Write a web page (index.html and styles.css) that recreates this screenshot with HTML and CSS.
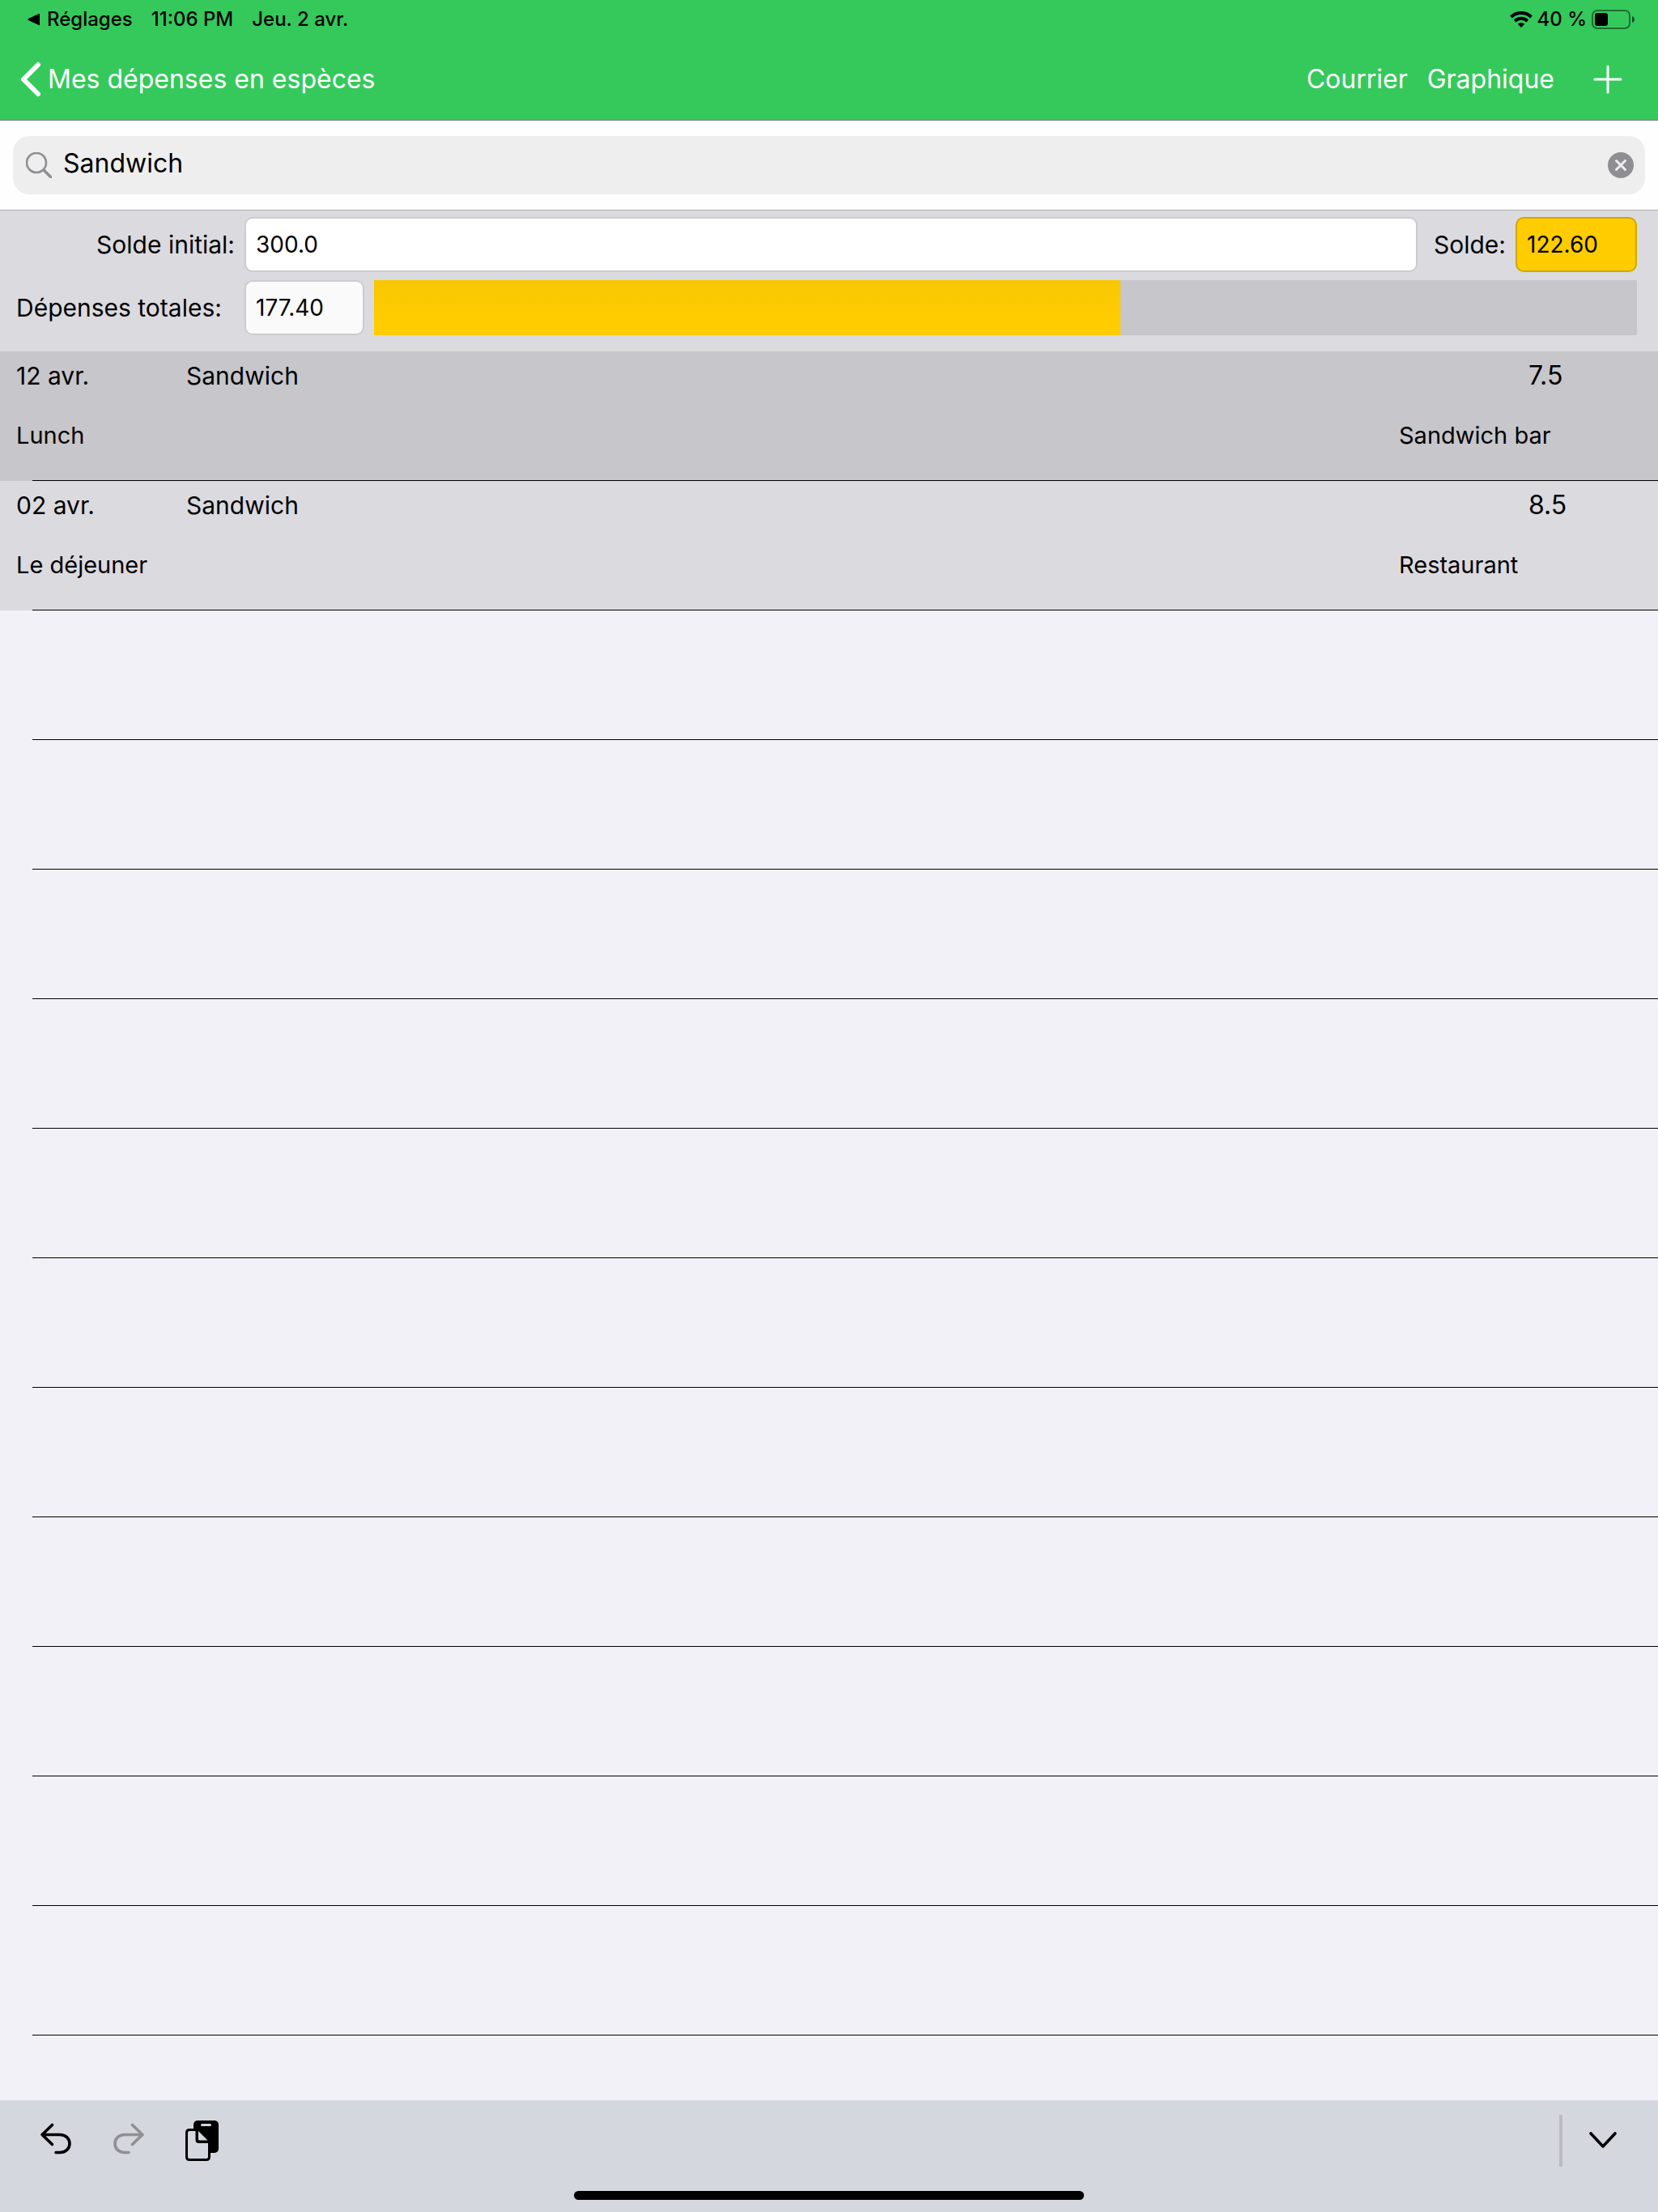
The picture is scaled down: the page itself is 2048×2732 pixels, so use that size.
FILE: index.html
```html
<!DOCTYPE html>
<html lang="fr">
<head>
    <meta charset="UTF-8">
    <meta name="viewport" content="width=device-width, initial-scale=1.0">
    <title>Mes dépenses en espèces</title>
    <link rel="stylesheet" href="styles.css">
</head>
<body>
    <header class="header">
        <div class="status-bar">
            <a href="#" class="status-back">
                <svg width="16" height="16" viewBox="0 0 16 16"><path d="M15 1.500v13q0 1-1 .6L1 9q-1.500-1 0-2L14 .9q1-.4 1 .6z"/></svg>
                Réglages
            </a>
            <span>11:06 PM</span>
            <span>Jeu. 2 avr.</span>
            <div class="status-right">
                <svg width="28" height="20" viewBox="0 0 28 20">
                    <path d="M1.500 7a18 18 0 0 1 25 0M6.200 12a11.200 11.200 0 0 1 15.600 0" fill="none" stroke="#000" stroke-width="4"/>
                    <path d="M9.800 15.800a6 6 0 0 1 8.400 0L14 20z"/>
                </svg>
                <span>40 %</span>
                <svg width="54" height="24" viewBox="0 0 54 24">
                    <rect x="1" y="1" width="46" height="22" rx="6" fill="none" stroke="#000" stroke-opacity=".45" stroke-width="2"/>
                    <rect x="4" y="4" width="16" height="16" rx="3"/>
                    <path d="M50 8q3 1 3 4t-3 4z" fill-opacity=".6"/>
                </svg>
            </div>
        </div>
        <nav class="nav-bar">
            <a href="#" class="nav-back">
                <svg width="26" height="44" viewBox="0 0 26 44" fill="none" stroke="#fff" stroke-width="6" stroke-linecap="round" stroke-linejoin="round"><path d="M22 4L4 22l18 18"/></svg>
                Mes dépenses en espèces
            </a>
            <div class="nav-actions">
                <button type="button">Courrier</button>
                <button type="button">Graphique</button>
                <button type="button" class="add" aria-label="Ajouter">
                    <svg width="36" height="36" viewBox="0 0 36 36" stroke="#fff" stroke-width="3" stroke-linecap="round"><path d="M18 2v32M2 18h32"/></svg>
                </button>
            </div>
        </nav>
    </header>

    <form class="search">
        <div class="search-field">
            <svg width="32" height="32" viewBox="0 0 32 32" fill="none" stroke="#8e8e93" stroke-linecap="round"><circle cx="13" cy="13" r="12" stroke-width="2.600"/><path d="M22 22l8.500 8.500" stroke-width="3.600"/></svg>
            <input type="text" value="Sandwich" aria-label="Rechercher">
            <button type="button" aria-label="Effacer">
                <svg width="32" height="32" viewBox="0 0 32 32"><circle cx="16" cy="16" r="16" fill="#8e8e93"/><path d="M10.500 10.500l11 11M21.500 10.500l-11 11" stroke="#eee" stroke-width="3" stroke-linecap="round"/></svg>
            </button>
        </div>
    </form>

    <section class="summary">
        <div class="summary-row">
            <label class="label label-right" for="initial">Solde initial:</label>
            <input class="field field-wide" id="initial" type="text" value="300.0">
            <label class="label-balance" for="balance">Solde:</label>
            <input class="field balance" id="balance" type="text" value="122.60">
        </div>
        <div class="summary-row">
            <label class="label" for="total">Dépenses totales:</label>
            <input class="field total" id="total" type="text" value="177.40" readonly>
            <div class="meter">
                <div class="meter-fill" style="width: 59.13%"></div>
            </div>
        </div>
    </section>

    <main class="list">
        <ul class="expenses">
            <li class="expense selected">
                <span>12 avr.</span>
                <span>Sandwich</span>
                <span class="amount">7.5</span>
                <span class="category">Lunch</span>
                <span class="place">Sandwich bar</span>
            </li>
            <li class="expense">
                <span>02 avr.</span>
                <span>Sandwich</span>
                <span class="amount">8.5</span>
                <span class="category">Le déjeuner</span>
                <span class="place">Restaurant</span>
            </li>
        </ul>
        <div class="empty-rows"></div>
    </main>

    <footer class="keyboard-bar">
        <div class="tools">
            <button type="button" aria-label="Annuler">
                <svg width="42" height="52" viewBox="0 0 42 52" fill="none" stroke="#000" stroke-width="3.600" stroke-linecap="round" stroke-linejoin="round"><path d="M16.500 6.500L4 18.500l12.500 12M4 18.500h22c7 0 12 4.500 12 11s-5 11-12 11h-5"/></svg>
            </button>
            <button type="button" aria-label="Rétablir" disabled>
                <svg width="42" height="52" viewBox="0 0 42 52" fill="none" stroke="#8f9092" stroke-width="3.600" stroke-linecap="round" stroke-linejoin="round"><path d="M25.500 6.500L38 18.500l-12.500 12M38 18.500H16c-7 0-12 4.500-12 11s5 11 12 11h5"/></svg>
            </button>
            <button type="button" aria-label="Coller">
                <svg width="42" height="52" viewBox="0 0 42 52">
                    <rect x="11" y="1" width="31" height="40" rx="5"/>
                    <path d="M6 12.500h9L30.500 28v18q0 3.500-3.500 3.500H6q-3.500 0-3.500-3.500V16q0-3.500 3.500-3.500z" fill="#d4d7de" stroke="#000" stroke-width="3"/>
                    <path d="M14.500 12.500l16 16V27z M15 12.500V25q0 2.500 2.500 2.500h13z" stroke="#000" stroke-width="3"/>
                    <path d="M17 14l11.500 11.500H18.500q-1.500 0-1.500-1.500z" fill="#d4d7de"/>
                    <path d="M21.500 6.500h10" stroke="#d4d7de" stroke-width="3" stroke-linecap="round"/>
                </svg>
            </button>
            <button type="button" class="hide" aria-label="Masquer le clavier">
                <svg width="36" height="22" viewBox="0 0 36 22" fill="none" stroke="#000" stroke-width="3.600" stroke-linecap="round" stroke-linejoin="round"><path d="M3 2l15 16L33 2"/></svg>
            </button>
        </div>
        <div class="home-indicator"></div>
    </footer>
</body>
</html>
```

FILE: styles.css
```css
* { box-sizing: border-box; }
body {
    margin: 0;
    min-height: 100vh;
    display: flex;
    flex-direction: column;
    font-family: Inter, "Liberation Sans", sans-serif;
    font-size: 30px;
    line-height: 40px;
    color: #000;
    background-color: #f2f1f7;
}
svg { display: block; flex: none; }
a { color: inherit; text-decoration: none; }
button {
    padding: 0;
    border: none;
    background: none;
    font: inherit;
    color: inherit;
    cursor: pointer;
}
input {
    min-width: 0;
    font: inherit;
    color: inherit;
    outline: none;
}

.header {
    background-color: #35c95b;
    border-bottom: 1px solid #77807a;
}
.status-bar {
    display: flex;
    align-items: center;
    gap: 23px;
    height: 48px;
    padding: 0 28px 0 34px;
    font-size: 24px;
    font-weight: 500;
}
.status-back {
    display: flex;
    align-items: center;
    gap: 8px;
}
.status-right {
    display: flex;
    align-items: center;
    gap: 6px;
    margin-left: auto;
}
.nav-bar {
    display: flex;
    align-items: center;
    justify-content: space-between;
    height: 100px;
    padding: 0 44px 0 25px;
    color: #fff;
    font-size: 32px;
}
.nav-back {
    display: flex;
    align-items: center;
    gap: 8px;
}
.nav-actions {
    display: flex;
    align-items: center;
    gap: 24px;
}
.add { margin-left: 24px; }

.search {
    padding: 19px 16px;
    background-color: #fefefe;
    border-bottom: 1px solid #aeaeb2;
}
.search-field {
    display: flex;
    align-items: center;
    gap: 14px;
    height: 72px;
    padding: 0 14px 0 16px;
    border-radius: 20px;
    background-color: #eee;
}
.search-field input {
    flex: 1;
    padding: 0 0 4px;
    border: none;
    background: none;
    font-size: 32px;
}

.summary {
    display: flex;
    flex-direction: column;
    gap: 10px;
    padding: 8px 26px 20px 20px;
    background-color: #dbdadf;
}
.summary-row {
    display: flex;
    align-items: center;
    gap: 12px;
}
.label {
    width: 270px;
    white-space: nowrap;
}
.label-right { text-align: right; }
.label-balance { margin-left: 8px; }
.field {
    width: 150px;
    height: 68px;
    padding: 0 12px;
    border: 2px solid #cccccd;
    border-radius: 10px;
    background-color: #fff;
    font-size: 28px;
}
.field-wide { flex: 1; }
.balance {
    background-color: #fc0;
    border-color: #d1a703;
}
.total {
    width: 148px;
    background-color: #fafafa;
}
.meter {
    flex: 1;
    height: 68px;
    background-color: #c7c6cb;
}
.meter-fill {
    height: 100%;
    background: linear-gradient(#f8c703, #fc0 70%);
}

.list {
    flex: 1;
    display: flex;
    flex-direction: column;
}
.expenses {
    margin: 0;
    padding: 0;
    list-style: none;
}
.expense {
    display: grid;
    grid-template-columns: 210px 1fr 320px;
    grid-template-rows: 40px 40px;
    row-gap: 34px;
    height: 160px;
    padding: 10px 0 0 20px;
    background: linear-gradient(#000, #000) 40px 100% / 100% 1px no-repeat #dbdadf;
}
.selected { background-color: #c7c6cb; }
.amount {
    padding-left: 160px;
    font-size: 32px;
}
.category {
    grid-column: 1 / 3;
    font-size: 29px;
}
.place { font-size: 29px; }
.empty-rows {
    flex: 1;
    margin-left: 40px;
    background: repeating-linear-gradient(transparent 0 159px, #000 159px 160px);
}

.keyboard-bar {
    display: flex;
    flex-direction: column;
    align-items: center;
    height: 138px;
    background-color: #d4d7de;
}
.tools {
    display: flex;
    align-items: center;
    gap: 48px;
    width: 100%;
    padding: 18px 50px 0 48px;
}
.hide {
    display: flex;
    align-items: center;
    height: 64px;
    margin-left: auto;
    padding-left: 32px;
    border-left: 4px solid #bbbcc0;
}
.home-indicator {
    width: 630px;
    height: 11px;
    margin-top: 30px;
    border-radius: 6px;
    background-color: #000;
}
```
